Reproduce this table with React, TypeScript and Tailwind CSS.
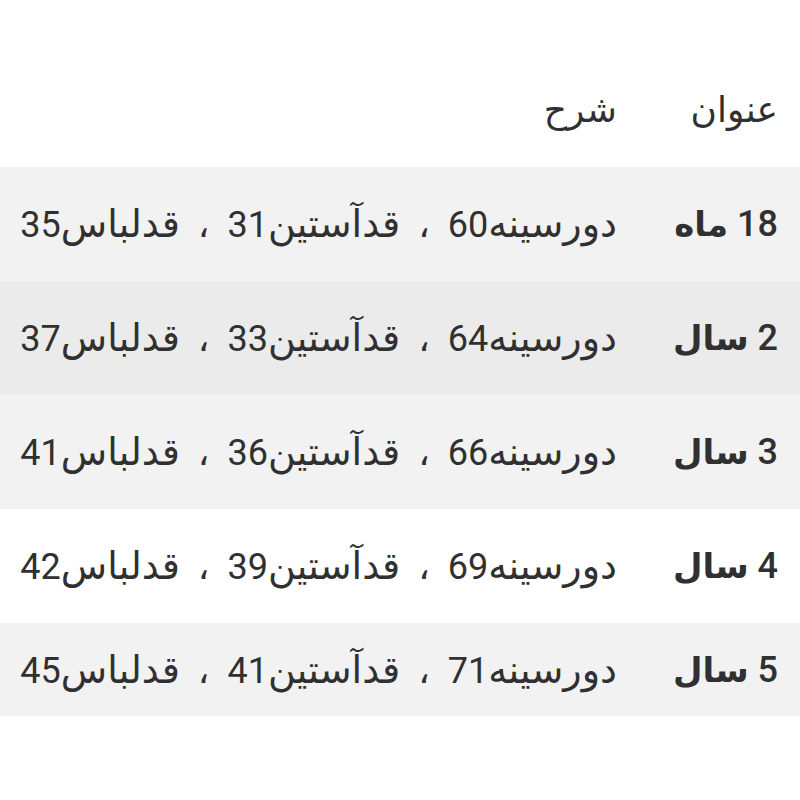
import React from "react";

type Row = { n: string; u: string; a: string[]; bg: string; h: string };

const rows: Row[] = [
  { n: "18", u: "ماه", a: ["60", "31", "35"], bg: "bg-[#f2f2f2]", h: "h-[114px]" },
  { n: "2", u: "سال", a: ["64", "33", "37"], bg: "bg-[#ebebeb]", h: "h-[114px]" },
  { n: "3", u: "سال", a: ["66", "36", "41"], bg: "bg-[#f2f2f2]", h: "h-[114px]" },
  { n: "4", u: "سال", a: ["69", "39", "42"], bg: "bg-white", h: "h-[114px]" },
  { n: "5", u: "سال", a: ["71", "41", "45"], bg: "bg-[#f2f2f2]", h: "h-[93px]" },
];

function Ar({ children }: { children: React.ReactNode }) {
  return <span className="text-[38px]">{children}</span>;
}

export default function App() {
  return (
    <div
      dir="rtl"
      className="w-[800px] h-[800px] bg-white text-[#303030] text-[36px] leading-none"
      style={{ fontFamily: "Roboto, 'DejaVu Sans', sans-serif" }}
    >
      <div className="pt-[53px]">
        <div className="flex items-center h-[114px]">
          <div className="w-[183px] pr-[22px] font-medium">عنوان</div>
          <div className="flex-1">شرح</div>
        </div>
        {rows.map((r) => (
          <div key={r.n} className={`flex items-center ${r.h} ${r.bg}`}>
            <div className="w-[183px] pr-[22px] whitespace-nowrap">
              <span className="font-medium">{r.n}</span>{" "}
              <span className="font-bold text-[34px]">{r.u}</span>
            </div>
            <div className="flex-1 whitespace-nowrap [word-spacing:9px]">
              <Ar>دورسینه</Ar>
              {r.a[0]} ، <Ar>قدآستین</Ar>
              {r.a[1]} ، <Ar>قدلباس</Ar>
              {r.a[2]}
            </div>
          </div>
        ))}
      </div>
    </div>
  );
}
